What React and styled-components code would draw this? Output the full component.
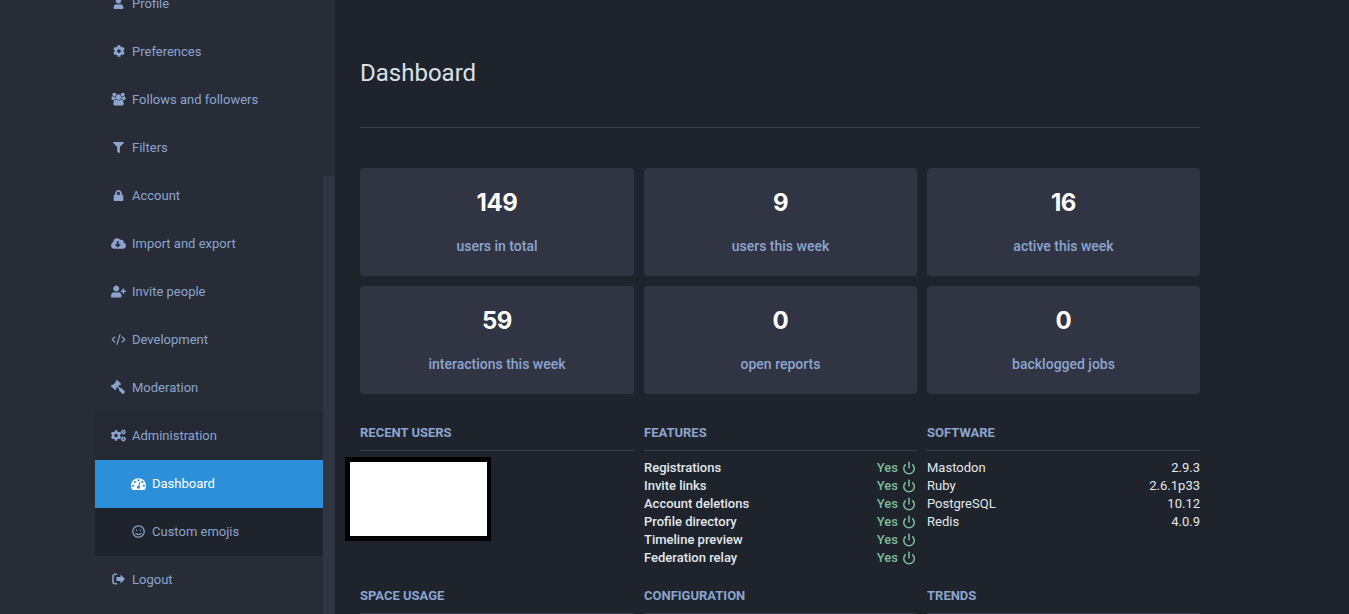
import styled, { createGlobalStyle } from 'styled-components';
import {
  FaUser,
  FaCog,
  FaFilter,
  FaLock,
  FaCloudDownloadAlt,
  FaUserPlus,
  FaGavel,
  FaCogs,
  FaRegSmile
} from 'react-icons/fa';
import { CodeXml, Power } from 'lucide-react';

const GlobalStyle = createGlobalStyle`
  html, body {
    margin: 0;
    height: 100%;
    overflow: hidden;
    background: #1f232b;
  }
  body {
    font-family: Roboto, "Liberation Sans", sans-serif;
  }
  * {
    box-sizing: border-box;
  }
`;

const Page = styled.div`
  display: flex;
  height: 614px;
  overflow: hidden;
`;

const Sidebar = styled.nav`
  width: 323px;
  flex: none;
  padding-left: 95px;
  background: #282c37;
  overflow: hidden;
`;

const Menu = styled.ul`
  list-style: none;
  margin: -20px 0 0;
  padding: 0 0 2px;
`;

const MenuItem = styled.li`
  display: flex;
  align-items: center;
  height: 48px;
  padding-left: ${(p) => (p.$sub ? '35px' : '15px')};
  padding-bottom: 2px;
  font-size: 13px;
  color: ${(p) => (p.$active ? '#fff' : '#8ba5d0')};
  background: ${(p) => (p.$active ? '#2b90d9' : 'transparent')};
`;

const MenuIcon = styled.span`
  display: flex;
  justify-content: center;
  align-items: center;
  width: 17px;
  margin-right: 5px;
  font-size: ${(p) => p.$size || 13}px;
  transform: ${(p) => (p.$flip ? 'scaleX(-1)' : 'none')};
`;

const AdminGroup = styled.div`
  background: #1f232b;
  border-radius: 4px 0 0 4px;
  overflow: hidden;
`;

const AdminHead = styled(MenuItem)`
  background: #252933;
`;

const Scrollbar = styled.div`
  width: 12px;
  flex: none;
  padding-top: 176px;
  background: #282c37;
`;

const ScrollThumb = styled.div`
  height: 100%;
  background: #313543;
`;

const Main = styled.main`
  flex: 1;
  padding-left: 25px;
`;

const Content = styled.div`
  width: 840px;
`;

const Title = styled.h1`
  margin: 0;
  padding-top: 58px;
  height: 128px;
  font-size: 24px;
  line-height: 30px;
  font-weight: 400;
  color: #d9e1e8;
  border-bottom: 1px solid #393f4f;
`;

const StatGrid = styled.div`
  display: grid;
  grid-template-columns: 274px 273px 273px;
  gap: 10px;
  margin-top: 40px;
`;

const Stat = styled.div`
  height: 108px;
  padding-top: 20px;
  text-align: center;
  background: #313543;
  border-radius: 4px;
`;

const StatNumber = styled.div`
  font-family: Inter, "Open Sans", sans-serif;
  font-size: 24px;
  line-height: 30px;
  font-weight: 700;
  letter-spacing: -0.4px;
  color: #fff;
`;

const StatLabel = styled.div`
  margin-top: 18px;
  font-size: 14px;
  line-height: 20px;
  font-weight: 500;
  color: #8ba5d0;
`;

const Sections = styled.div`
  display: grid;
  grid-template-columns: 274px 273px 273px;
  column-gap: 10px;
  margin-top: 30px;
`;

const Section = styled.section`
  height: 163px;
`;

const SectionTitle = styled.h4`
  margin: 0 0 8px;
  padding-top: 1px;
  height: 27px;
  font-size: 13px;
  line-height: 16px;
  font-weight: 700;
  text-transform: uppercase;
  color: #8ba5d0;
  border-bottom: 1px solid #393f4f;
`;

const Row = styled.div`
  display: flex;
  justify-content: space-between;
  height: 18px;
  font-size: 13px;
  line-height: 18px;
  font-weight: ${(p) => (p.$bold ? 500 : 400)};
  color: #e1e8ee;
`;

const Yes = styled.span`
  display: flex;
  align-items: center;
  gap: 4px;
  color: #79bd9a;
  padding-right: 1px;
`;

const Redacted = styled.div`
  width: 146px;
  height: 84px;
  margin: -2px 0 0 -15px;
  background: #fff;
  border: 5px solid #000;
  border-right-width: 4px;
`;

const LogoutIcon = () => (
  <svg width="14" height="12" viewBox="0 0 14 12" fill="currentColor">
    <path
      d="M5 1.25H3A2 2 0 0 0 1 3.25v5.5a2 2 0 0 0 2 2h2"
      fill="none"
      stroke="currentColor"
      strokeWidth="1.5"
    />
    <path d="M4.5 4h4V1.5L13 6l-4.5 4.5V8h-4z" />
  </svg>
);

const UsersIcon = () => (
  <svg width="15" height="13" viewBox="0 128 2048 1664" fill="currentColor">
    <path d="M657 896q-162 5-265 128h-134q-82 0-138-40.5t-56-118.5q0-353 124-353 6 0 43.5 21t97.5 42.5 119 21.5q67 0 133-23-5 37-5 66 0 139 81 256zm1071 637q0 120-73 189.5t-194 69.5h-874q-121 0-194-69.5t-73-189.5q0-53 3.5-103.5t14-109 26.5-108.5 43-97.5 62-81 85.5-53.5 111.5-20q10 0 43 21.5t73 48 107 48 135 21.5 135-21.5 107-48 73-48 43-21.5q61 0 111.5 20t85.5 53.5 62 81 43 97.5 26.5 108.5 14 109 3.5 103.5zm-1024-1277q0 106-75 181t-181 75-181-75-75-181 75-181 181-75 181 75 75 181zm704 384q0 159-112.5 271.5t-271.5 112.5-271.5-112.5-112.5-271.5 112.5-271.5 271.5-112.5 271.5 112.5 112.5 271.5zm576 225q0 78-56 118.5t-138 40.5h-134q-103-123-265-128 81-117 81-256 0-29-5-66 66 23 133 23 59 0 119-21.5t97.5-42.5 43.5-21q124 0 124 353zm-128-609q0 106-75 181t-181 75-181-75-75-181 75-181 181-75 181 75 75 181z" />
  </svg>
);

const GaugeIcon = () => (
  <svg width="15" height="15" viewBox="0 0 1792 1792" fill="currentColor">
    <path d="M384 1152q0-53-37.5-90.5t-90.5-37.5-90.5 37.5-37.5 90.5 37.5 90.5 90.5 37.5 90.5-37.5 37.5-90.5zm192-448q0-53-37.5-90.5t-90.5-37.5-90.5 37.5-37.5 90.5 37.5 90.5 90.5 37.5 90.5-37.5 37.5-90.5zm428 481l101-382q6-26-7.5-48.5t-38.5-29.5-48 6.5-30 39.5l-101 382q-60 5-107 43.5t-63 98.5q-20 77 20 146t117 89 146-20 89-117q16-60-6-117t-72-91zm660-33q0-53-37.5-90.5t-90.5-37.5-90.5 37.5-37.5 90.5 37.5 90.5 90.5 37.5 90.5-37.5 37.5-90.5zm-640-640q0-53-37.5-90.5t-90.5-37.5-90.5 37.5-37.5 90.5 37.5 90.5 90.5 37.5 90.5-37.5 37.5-90.5zm448 192q0-53-37.5-90.5t-90.5-37.5-90.5 37.5-37.5 90.5 37.5 90.5 90.5 37.5 90.5-37.5 37.5-90.5zm320 448q0 261-141 483-19 29-54 29h-1402q-35 0-54-29-141-221-141-483 0-182 71-348t191-286 286-191 348-71 348 71 286 191 191 286 71 348z" />
  </svg>
);

const mainItems = [
  ['Profile', <FaUser />, 11],
  ['Preferences', <FaCog />, 12],
  ['Follows and followers', <UsersIcon />],
  ['Filters', <FaFilter />, 11],
  ['Account', <FaLock />, 11],
  ['Import and export', <FaCloudDownloadAlt />, 15],
  ['Invite people', <FaUserPlus />, 15],
  ['Development', <CodeXml size={15} strokeWidth={1.8} />],
  ['Moderation', <FaGavel />, 14, true]
];

const stats = [
  ['149', 'users in total'],
  ['9', 'users this week'],
  ['16', 'active this week'],
  ['59', 'interactions this week'],
  ['0', 'open reports'],
  ['0', 'backlogged jobs']
];

const features = [
  'Registrations',
  'Invite links',
  'Account deletions',
  'Profile directory',
  'Timeline preview',
  'Federation relay'
];

const software = [
  ['Mastodon', '2.9.3'],
  ['Ruby', '2.6.1p33'],
  ['PostgreSQL', '10.12'],
  ['Redis', '4.0.9']
];

export default function App() {
  return (
    <Page>
      <GlobalStyle />
      <Sidebar>
        <Menu>
          {mainItems.map(([label, icon, size, flip]) => (
            <MenuItem key={label}>
              <MenuIcon $size={size} $flip={flip}>
                {icon}
              </MenuIcon>
              {label}
            </MenuItem>
          ))}
          <AdminGroup>
            <AdminHead>
              <MenuIcon $size={15}>
                <FaCogs />
              </MenuIcon>
              Administration
            </AdminHead>
            <MenuItem $sub $active>
              <MenuIcon>
                <GaugeIcon />
              </MenuIcon>
              Dashboard
            </MenuItem>
            <MenuItem $sub>
              <MenuIcon $size={13}>
                <FaRegSmile />
              </MenuIcon>
              Custom emojis
            </MenuItem>
          </AdminGroup>
          <MenuItem>
            <MenuIcon>
              <LogoutIcon />
            </MenuIcon>
            Logout
          </MenuItem>
        </Menu>
      </Sidebar>
      <Scrollbar>
        <ScrollThumb />
      </Scrollbar>
      <Main>
        <Content>
          <Title>Dashboard</Title>
          <StatGrid>
            {stats.map(([number, label]) => (
              <Stat key={label}>
                <StatNumber>{number}</StatNumber>
                <StatLabel>{label}</StatLabel>
              </Stat>
            ))}
          </StatGrid>
          <Sections>
            <Section>
              <SectionTitle>Recent users</SectionTitle>
              <Redacted />
            </Section>
            <Section>
              <SectionTitle>Features</SectionTitle>
              {features.map((name) => (
                <Row key={name} $bold>
                  {name}
                  <Yes>
                    Yes <Power size={14} strokeWidth={2.6} />
                  </Yes>
                </Row>
              ))}
            </Section>
            <Section>
              <SectionTitle>Software</SectionTitle>
              {software.map(([name, version]) => (
                <Row key={name}>
                  {name}
                  <span>{version}</span>
                </Row>
              ))}
            </Section>
            <Section>
              <SectionTitle>Space usage</SectionTitle>
            </Section>
            <Section>
              <SectionTitle>Configuration</SectionTitle>
            </Section>
            <Section>
              <SectionTitle>Trends</SectionTitle>
            </Section>
          </Sections>
        </Content>
      </Main>
    </Page>
  );
}
